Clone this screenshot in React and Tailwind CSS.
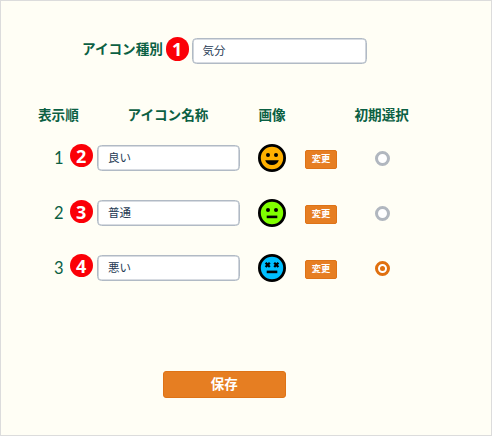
const JP = "font-['Noto_Sans_CJK_JP',sans-serif]";

function Badge({ n, className = "" }) {
  return (
    <span
      className={`flex h-[23.5px] w-[23.5px] shrink-0 items-center justify-center rounded-full bg-[#fb0007] font-['Noto_Sans',sans-serif] text-[18px] leading-none font-bold text-white ${className}`}
    >
      {n}
    </span>
  );
}

function Field({ value, className = "" }) {
  return (
    <div
      className={`flex h-[26px] shrink-0 items-center rounded-[4.5px] border border-[#b1bac5] bg-white pl-[10px] text-[11.5px] leading-none text-[#263a54] shadow-[inset_0_0_0_0.6px_#b1bac5] ${className}`}
    >
      {value}
    </div>
  );
}

function Face({ mood }) {
  const fills = { good: "#ffb000", normal: "#80ff00", bad: "#00bfff" };
  return (
    <svg viewBox="0 0 28 28" className="h-7 w-7">
      <circle cx="14" cy="14" r="12.6" fill={fills[mood]} stroke="#000" strokeWidth="2.8" />
      {mood === "bad" ? (
        <path d="M7.6 8.8l4.2 4.2M11.8 8.8L7.6 13M16.2 8.8l4.2 4.2M20.4 8.8l-4.2 4.2" stroke="#000" strokeWidth="2.3" />
      ) : (
        <>
          <circle cx="10" cy="11" r="2" />
          <circle cx="18" cy="11" r="2" />
        </>
      )}
      {mood === "good" ? (
        <path d="M7.2 16.2h13.6c-.9 2.9-3.6 4.8-6.8 4.8s-5.9-1.9-6.8-4.8z" />
      ) : (
        <rect x="8.7" y="16.6" width="10.6" height="2.6" />
      )}
    </svg>
  );
}

function Radio({ checked }) {
  return (
    <span
      className={`flex h-[15px] w-[15px] items-center justify-center rounded-full border-[3px] bg-white ${
        checked ? "border-[#e0700f]" : "border-[#b1b7bf]"
      }`}
    >
      {checked && <span className="h-[5px] w-[5px] rounded-full bg-[#e0700f]" />}
    </span>
  );
}

const rows = [
  { n: 1, badge: 2, badgeClass: "mb-[5px]", name: "良い", mood: "good" },
  { n: 2, badge: 3, badgeClass: "mb-[3px]", name: "普通", mood: "normal" },
  { n: 3, badge: 4, badgeClass: "mb-[5px]", name: "悪い", mood: "bad", checked: true },
];

export default function App() {
  return (
    <main className={`h-[436px] w-[492px] overflow-hidden border border-[#dcdcdc] bg-[#fffef5] text-[#0b6043] ${JP}`}>
      <div className="mt-[37px] flex h-[26px] items-center pl-[81px] text-[13.6px] font-bold">
        <span className="mb-[5px] w-[83.5px] whitespace-nowrap leading-none">アイコン種別</span>
        <Badge n={1} className="mb-[4px]" />
        <Field value="気分" className="ml-[2.5px] w-[175.5px] font-normal" />
      </div>

      <div className="mt-[41px] flex h-5 items-center whitespace-nowrap pl-[37px] text-[13.6px] leading-none font-bold">
        <span className="w-[89.5px]">表示順</span>
        <span className="w-[131px]">アイコン名称</span>
        <span className="w-[96px]">画像</span>
        <span>初期選択</span>
      </div>

      <div className="mt-[5.5px]">
        {rows.map((r) => (
          <div key={r.n} className="flex h-[55px] items-center pl-[53px]">
            <span className="mt-px w-[15.5px] font-['Lato',sans-serif] text-[16.5px] leading-none">{r.n}</span>
            <Badge n={r.badge} className={r.badgeClass} />
            <Field value={r.name} className="mb-px ml-[4px] w-[142.5px]" />
            <span className="ml-[18px]">
              <Face mood={r.mood} />
            </span>
            <button className="mt-[3px] ml-[19.5px] flex h-[19px] w-[32px] items-center justify-center rounded-[2px] border border-[#de7317] bg-[#e67e22] pb-px text-[9.3px] leading-none font-bold text-white">
              変更
            </button>
            <span className="mt-px ml-[37.5px]">
              <Radio checked={r.checked} />
            </span>
          </div>
        ))}
      </div>

      <button className="mt-[75px] ml-[162px] flex h-[27px] w-[122.5px] items-center justify-center rounded-[3px] border border-[#de7317] bg-[#e67e22] pb-px text-[13.5px] leading-none font-bold text-white">
        保存
      </button>
    </main>
  );
}
